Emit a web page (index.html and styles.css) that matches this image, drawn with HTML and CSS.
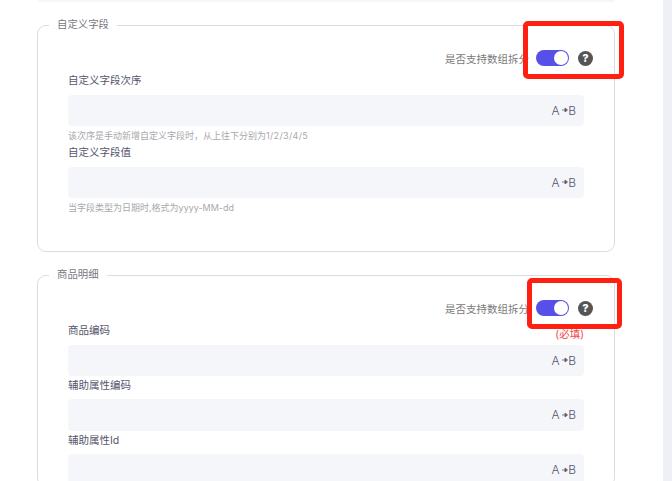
FILE: index.html
```html
<!DOCTYPE html>
<html lang="en">

<head>
  <meta charset="UTF-8" />
  <meta name="viewport" content="width=device-width, initial-scale=1.0">
  <title>字段映射</title>
  <link rel="stylesheet" href="styles.css">
</head>

<body>
  <div class="page">
    <main class="content">
      <div class="input-remnant"></div>

      <fieldset class="group group-custom">
        <legend>自定义字段</legend>
        <div class="switch-row">
          <span class="switch-label">是否支持数组拆分</span>
          <span class="toggle"><span class="knob"></span></span>
          <span class="help">?</span>
        </div>
        <div class="label-row label-first">自定义字段次序</div>
        <div class="map-input">
          <span class="map-tag">A<svg class="arrow" viewBox="0 0 6 6"><path d="M0 3h3.5M3 1l2.5 2L3 5z" /></svg>B</span>
        </div>
        <div class="hint">该次序是手动新增自定义字段时，从上往下分别为<span class="hint-num">1/2/3/4/5</span></div>
        <div class="label-row label-tight">自定义字段值</div>
        <div class="map-input">
          <span class="map-tag">A<svg class="arrow" viewBox="0 0 6 6"><path d="M0 3h3.5M3 1l2.5 2L3 5z" /></svg>B</span>
        </div>
        <div class="hint">当字段类型为日期时,格式为yyyy-MM-dd</div>
      </fieldset>

      <fieldset class="group">
        <legend>商品明细</legend>
        <div class="switch-row">
          <span class="switch-label">是否支持数组拆分</span>
          <span class="toggle"><span class="knob"></span></span>
          <span class="help">?</span>
        </div>
        <div class="label-row label-first">商品编码<span class="required">(必填)</span></div>
        <div class="map-input">
          <span class="map-tag">A<svg class="arrow" viewBox="0 0 6 6"><path d="M0 3h3.5M3 1l2.5 2L3 5z" /></svg>B</span>
        </div>
        <div class="label-row label-close">辅助属性编码</div>
        <div class="map-input tall">
          <span class="map-tag">A<svg class="arrow" viewBox="0 0 6 6"><path d="M0 3h3.5M3 1l2.5 2L3 5z" /></svg>B</span>
        </div>
        <div class="label-row label-close">辅助属性Id</div>
        <div class="map-input tall">
          <span class="map-tag">A<svg class="arrow" viewBox="0 0 6 6"><path d="M0 3h3.5M3 1l2.5 2L3 5z" /></svg>B</span>
        </div>
      </fieldset>
    </main>
    <aside class="side-strip"></aside>
  </div>

  <!-- annotation boxes drawn over the screenshot -->
  <div class="mark mark-one"></div>
  <div class="mark mark-two"></div>
</body>

</html>
```

FILE: styles.css
```css
html,
body {
  margin: 0;
  height: 100%;
  overflow: hidden;
}

body {
  font-family: Inter, "Noto Sans CJK SC", sans-serif;
  background: #fff;
  position: relative;
}

.page {
  display: flex;
  height: 481px;
  overflow: hidden;
}

.content {
  flex: 1;
  padding-left: 37px;
  padding-right: 48px;
  min-width: 0;
}

.side-strip {
  width: 9px;
  background: #eef0f5;
}

.input-remnant {
  height: 2px;
  margin-left: 1px;
  background: #f5f6fa;
  border-radius: 0 0 4px 4px;
  margin-bottom: 16px;
}

.group {
  margin: 0 0 16px;
  padding: 0 30px;
  border: 1px solid #dcdcdf;
  border-radius: 9px;
  min-width: 0;
}

.group-custom {
  height: 232px;
}

legend {
  margin-left: -19px;
  padding: 0 8px;
  font-size: 10.4px;
  line-height: 14px;
  color: #77777f;
}

.switch-row {
  display: flex;
  align-items: center;
  justify-content: flex-end;
  height: 16px;
  margin-top: 18px;
  margin-right: -9px;
}

.switch-label {
  font-size: 10.5px;
  color: #7a7a7a;
  width: 91px;
  white-space: nowrap;
}

.toggle {
  display: flex;
  justify-content: flex-end;
  width: 33px;
  height: 16px;
  box-sizing: border-box;
  padding: 1px;
  border-radius: 8px;
  background: #5650e8;
}

.knob {
  width: 14px;
  height: 14px;
  border-radius: 50%;
  background: #fff;
}

.help {
  width: 15px;
  height: 15px;
  margin-left: 9px;
  border-radius: 50%;
  background: #555;
  color: #fff;
  font-size: 11px;
  font-weight: 800;
  line-height: 15px;
  text-align: center;
}

.label-row {
  display: flex;
  justify-content: space-between;
  font-size: 10.5px;
  line-height: 14px;
  color: #55556c;
}

.label-first {
  margin-top: 8px;
  margin-bottom: 7px;
}

.label-tight {
  margin-top: 4px;
  margin-bottom: 7px;
}

.label-close {
  margin-top: 3px;
  margin-bottom: 6px;
}

.required {
  margin-top: 4px;
  margin-bottom: -4px;
  font-size: 10.5px;
  line-height: 14px;
  color: #f5484d;
}

.map-input {
  display: flex;
  align-items: center;
  justify-content: flex-end;
  height: 31px;
  padding-right: 8px;
  border-radius: 4px;
  background: #f5f6fa;
}

.map-input.tall {
  height: 32px;
}

.map-tag {
  display: flex;
  align-items: center;
  margin-top: -1px;
  font-size: 12px;
  font-weight: 300;
  color: #55556c;
}

.arrow {
  width: 6px;
  height: 6px;
  margin: 0 0.5px 0 2px;
  fill: #5c5c74;
  stroke: #5c5c74;
  stroke-width: 0.8;
}

.hint {
  margin-top: 4px;
  font-size: 9px;
  line-height: 12px;
  color: #a8a8ae;
}

.hint-num {
  letter-spacing: 0.35px;
}

.mark {
  position: absolute;
  box-sizing: border-box;
  border: 5px solid #ff2012;
  border-radius: 5px;
}

.mark-one {
  left: 523px;
  top: 21px;
  width: 101px;
  height: 58px;
}

.mark-two {
  left: 527px;
  top: 278px;
  width: 95px;
  height: 51px;
}
```
